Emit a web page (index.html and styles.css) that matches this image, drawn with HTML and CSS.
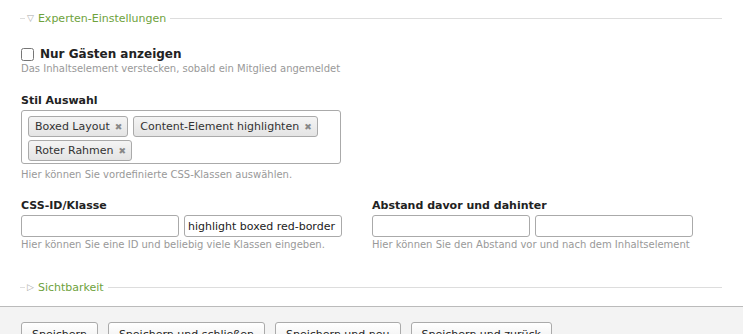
FILE: index.html
```html
<!DOCTYPE html>
<html lang="de">
<head>
    <meta charset="UTF-8">
    <title>Inhaltselement bearbeiten</title>
    <link rel="stylesheet" href="styles.css">
</head>
<body>
    <div class="content">
        <div class="legend">
            <span class="legendLine short"></span>
            <span class="toggle">&#9661;</span>
            <span class="legendText">Experten-Einstellungen</span>
            <span class="legendLine"></span>
        </div>

        <div class="widget checkRow">
            <label class="check"><input type="checkbox"> <b>Nur Gästen anzeigen</b></label>
            <p class="tip">Das Inhaltselement verstecken, sobald ein Mitglied angemeldet</p>
        </div>

        <div class="widget styleRow">
            <h3>Stil Auswahl</h3>
            <div class="chosen">
                <span class="tag">Boxed Layout <i>&#10006;</i></span>
                <span class="tag">Content-Element highlighten <i>&#10006;</i></span>
                <span class="tag">Roter Rahmen <i>&#10006;</i></span>
            </div>
            <p class="tip">Hier können Sie vordefinierte CSS-Klassen auswählen.</p>
        </div>

        <div class="twoCols">
            <div class="widget">
                <h3>CSS-ID/Klasse</h3>
                <div class="pair">
                    <input type="text" class="text">
                    <input type="text" class="text" value="highlight boxed red-border">
                </div>
                <p class="tip">Hier können Sie eine ID und beliebig viele Klassen eingeben.</p>
            </div>
            <div class="widget">
                <h3>Abstand davor und dahinter</h3>
                <div class="pair">
                    <input type="text" class="text">
                    <input type="text" class="text">
                </div>
                <p class="tip">Hier können Sie den Abstand vor und nach dem Inhaltselement</p>
            </div>
        </div>

        <div class="legend closed">
            <span class="legendLine short"></span>
            <span class="toggle">&#9655;</span>
            <span class="legendText">Sichtbarkeit</span>
            <span class="legendLine"></span>
        </div>
    </div>

    <div class="submit">
        <button>Speichern</button>
        <button>Speichern und schließen</button>
        <button>Speichern und neu</button>
        <button>Speichern und zurück</button>
    </div>
</body>
</html>
```

FILE: styles.css
```css
body {
    margin: 0;
    font-family: "DejaVu Sans", Verdana, sans-serif;
    font-size: 11px;
    color: #222;
    background: #fff;
    overflow: hidden;
}

.content {
    padding: 0 21px 0 20px;
}

.legend {
    display: flex;
    align-items: center;
    height: 14px;
    margin-top: 11px;
}

.legendLine {
    flex: 1;
    height: 1px;
    background: #ddd;
}

.legendLine.short {
    flex: 0 0 5px;
}

.toggle {
    color: #aaa;
    font-size: 9px;
    margin: 0 4px 0 2px;
}

.legendText {
    color: #6ea23c;
    font-size: 11px;
    margin-right: 4px;
}

.widget {
    padding-left: 1px;
}

.checkRow {
    margin-top: 22px;
}

.check {
    display: flex;
    align-items: center;
    font-size: 12px;
    height: 14px;
}

.check input {
    width: 13px;
    height: 13px;
    margin: 0 6px 0 0;
}

.tip {
    margin: 1px 0 0;
    font-size: 10px;
    color: #999;
    line-height: 13px;
}

h3 {
    margin: 0;
    font-size: 11px;
    line-height: 14px;
}

.styleRow {
    margin-top: 19px;
}

.styleRow h3 {
    margin-bottom: 2px;
}

.chosen {
    width: 307px;
    height: 42px;
    border: 1px solid #aaa;
    border-radius: 3px;
    padding: 5px 5px 5px 6px;
    display: flex;
    flex-wrap: wrap;
    gap: 3px 5px;
    margin-bottom: 4px;
}

.tag {
    display: inline-flex;
    align-items: center;
    height: 19px;
    padding: 0 5px 0 6px;
    border: 1px solid #aaa;
    border-radius: 3px;
    background: linear-gradient(#f4f4f4, #e4e4e4);
    font-size: 11px;
    color: #333;
}

.tag i {
    font-style: normal;
    font-size: 9px;
    color: #888;
    margin-left: 5px;
}

.twoCols {
    display: flex;
    margin-top: 18px;
}

.twoCols .widget {
    width: 350px;
}

.twoCols h3 {
    margin-bottom: 2px;
}

.pair {
    display: flex;
    gap: 5px;
}

.text {
    box-sizing: border-box;
    width: 158px;
    height: 22px;
    border: 1px solid #aaa;
    border-radius: 3px;
    padding: 2px 3px;
    margin: 0;
    font-family: "DejaVu Sans", Verdana, sans-serif;
    font-size: 11px;
    color: #222;
}

.legend.closed {
    margin-top: 29px;
}

.submit {
    margin-top: 12px;
    border-top: 1px solid #bbb;
    background: #f3f3f3;
    height: 40px;
    padding: 15px 0 0 21px;
    display: flex;
    gap: 10px;
}

button {
    height: 25px;
    padding: 0 10px;
    border: 1px solid #aaa;
    border-radius: 3px;
    background: linear-gradient(#fff, #ececec);
    font-family: "DejaVu Sans", Verdana, sans-serif;
    font-size: 11px;
    color: #222;
}
```
